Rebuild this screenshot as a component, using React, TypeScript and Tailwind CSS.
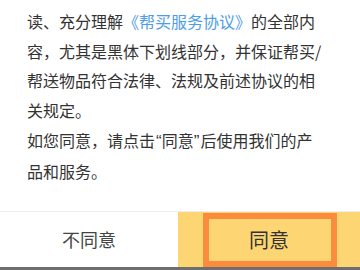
import React from "react";

export default function App() {
  const font = { fontFamily: '"Noto Sans CJK SC", "Noto Sans", sans-serif' };
  return (
    <div className="w-[360px] h-[270px] bg-white flex flex-col overflow-hidden" style={font}>
      <div className="h-[211px] overflow-hidden pl-[27px] pt-[7px] text-[16px] leading-[29.7px] text-[#333333]">
        <div className="whitespace-nowrap">
          读、充分理解<span className="text-[#4d9de8]">《帮买服务协议》</span>的全部内
        </div>
        <div className="whitespace-nowrap">容，尤其是黑体下划线部分，并保证帮买/</div>
        <div className="whitespace-nowrap">帮送物品符合法律、法规及前述协议的相</div>
        <div className="whitespace-nowrap">关规定。</div>
        <div className="whitespace-nowrap">
          如您同意，请点击<span className="ml-[1px] font-['Liberation_Sans',sans-serif] text-[17px]">“</span>同意<span className="mr-[1px] font-['Liberation_Sans',sans-serif] text-[17px]">”</span>后使用我们的产
        </div>
        <div className="whitespace-nowrap">品和服务。</div>
      </div>
      <div className="flex h-[56px] border-t border-[#eeeeee]">
        <button className="w-[178px] h-full bg-white flex items-center justify-center text-[18px] text-[#444444]">
          不同意
        </button>
        <div className="relative flex-1 h-full bg-[#fdd673] flex items-center justify-center text-[20px] text-[#333333]">
          同意
          <div className="absolute left-[25px] right-[23px] top-[1px] bottom-0 border-[6px] border-[#fb8b3d]" />
        </div>
      </div>
      <div className="h-[3px] bg-[#6e6e6e]" />
    </div>
  );
}
